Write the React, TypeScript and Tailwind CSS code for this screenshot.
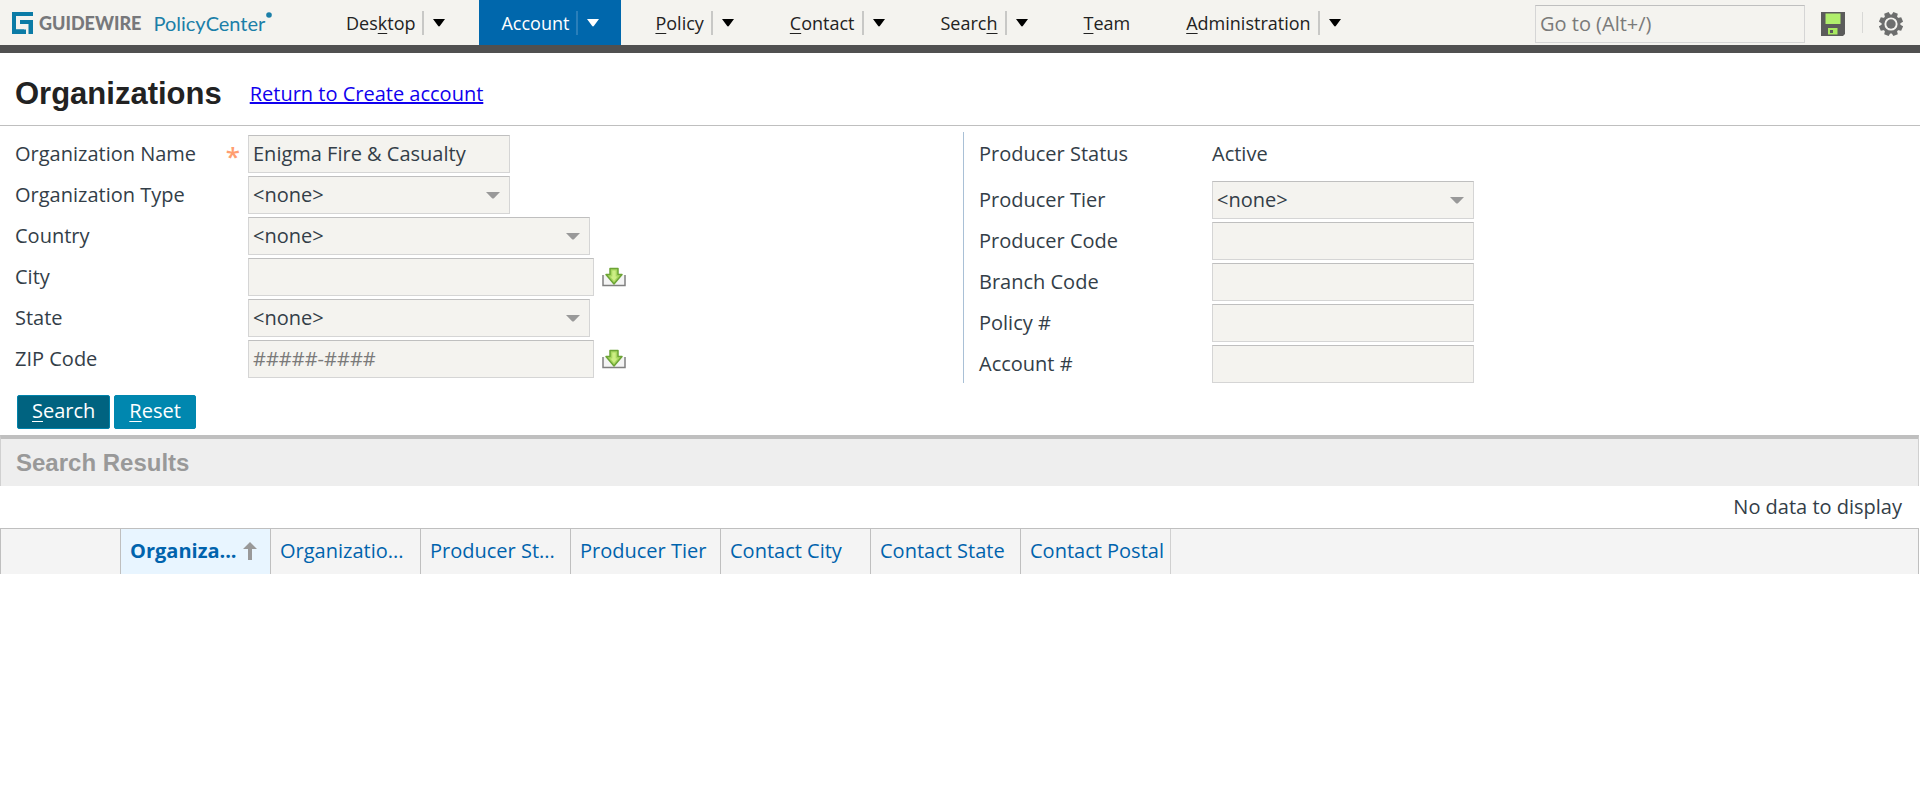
import type { ReactNode } from 'react'

type NavEntry = { before: string; key: string; after: string; menu: boolean; active?: boolean }

const NAV: NavEntry[] = [
  { before: 'Des', key: 'k', after: 'top', menu: true },
  { before: 'Account', key: '', after: '', menu: true, active: true },
  { before: '', key: 'P', after: 'olicy', menu: true },
  { before: '', key: 'C', after: 'ontact', menu: true },
  { before: 'Searc', key: 'h', after: '', menu: true },
  { before: '', key: 'T', after: 'eam', menu: false },
  { before: '', key: 'A', after: 'dministration', menu: true },
]

const CONTROL =
  'h-[38px] border border-[#d5d5d5] border-t-[#bfbfbf] bg-[#f4f3ef] px-1 text-[#333e48] placeholder:text-[#7a7a7a] placeholder:opacity-100 outline-none'

const FIELD = `${CONTROL} pb-[2px]`

function Triangle({ className }: { className: string }) {
  return (
    <svg viewBox="0 0 12 8" className={className} fill="currentColor" preserveAspectRatio="none" aria-hidden="true">
      <path d="M0 0H12L7 6.800Q6 8.200 5 6.800Z" />
    </svg>
  )
}

function NavItem({ item }: { item: NavEntry }) {
  return (
    <li
      className={
        item.active
          ? 'flex items-center bg-[#0067ac] px-[22px] pt-px text-white'
          : 'flex items-center px-[22px] pt-px text-[#222222]'
      }
    >
      <a href="#" className="leading-6">
        {item.before}
        <span className="underline decoration-1 underline-offset-3">{item.key}</span>
        {item.after}
      </a>
      {item.menu && (
        <button
          type="button"
          aria-label="Open menu"
          className={
            item.active
              ? 'ml-[7px] flex h-6 items-center border-l-2 border-[#2a7fba] pl-[9px]'
              : 'ml-[7px] flex h-6 items-center border-l-2 border-[#c8c8c6] pl-[9px] text-black'
          }
        >
          <Triangle className="h-2 w-3" />
        </button>
      )}
    </li>
  )
}

function Logo() {
  return (
    <a href="#" className="flex w-[312px] shrink-0 items-center pl-3">
      <svg viewBox="0 0 22 22" className="h-[22px] w-[22px]" aria-hidden="true" fill="#0b7ba6">
        <path d="M0 0H21V4H4V17.500H12V22H0Z" />
        <path d="M8 8H21V22H16.500V12H8Z" />
        <path d="M0 17.500H14V22H0Z" />
      </svg>
      <span className="ml-[5px] font-['Lato'] text-[18px] font-black text-[#77787b]">GUIDEWIRE</span>
      <span className="ml-3 font-['Lato'] text-[20px] text-[#1b7fa8]">PolicyCenter</span>
      <svg viewBox="0 0 6 6" className="mb-4 ml-px h-[6px] w-[6px]" aria-hidden="true">
        <circle cx="3" cy="3" r="2.800" fill="#1b7fa8" />
      </svg>
    </a>
  )
}

function SaveIcon() {
  return (
    <svg viewBox="0 0 24 24" className="h-6 w-6" aria-hidden="true">
      <path d="M0 0H24V22L22 24H0Z" fill="#5b5b5b" />
      <rect x="4.500" y="1.500" width="15" height="10.500" fill="#b0ee6c" />
      <rect x="7" y="16" width="9.500" height="6.500" fill="#a8e95f" />
      <rect x="9" y="18" width="3" height="3" fill="#5b5b5b" />
    </svg>
  )
}

function GearIcon() {
  return (
    <svg viewBox="0 0 24 24" className="h-6 w-6" aria-hidden="true">
      <g fill="#6d6e6e">
        {[0, 45, 90, 135, 180, 225, 270, 315].map((angle) => (
          <path key={angle} d="M8.800 5L9.600 0H14.400L15.200 5Z" transform={`rotate(${angle + 22.5} 12 12)`} />
        ))}
      </g>
      <circle cx="12" cy="12" r="8" fill="#f4f3ef" stroke="#6d6e6e" strokeWidth="2.800" />
      <circle cx="12" cy="12" r="4.700" fill="#6d6e6e" />
    </svg>
  )
}

function AutofillIcon() {
  return (
    <svg viewBox="0 0 24 20" className="h-5 w-6" aria-hidden="true">
      <path d="M1 8V18.500H23V8" fill="#f4f4f4" stroke="#808080" strokeWidth="1.500" />
      <path
        d="M8 1.500H16V7.500H20L12 17L4 7.500H8Z"
        fill="#a9d860"
        stroke="#6da436"
        strokeWidth="1.500"
        strokeLinejoin="round"
      />
      <path d="M10.300 3.500H13.700V9.500H15.500L12 14L8.500 9.500H10.300Z" fill="#cdee85" />
    </svg>
  )
}

function Row({ id, label, required, children }: { id: string; label: string; required?: boolean; children: ReactNode }) {
  return (
    <div className="flex items-center">
      <label htmlFor={id} className="flex w-[233px] shrink-0 items-center justify-between pr-2">
        {label}
        {required && <span className="pt-1 text-[26px] font-semibold leading-7 text-[#ff9e70]">*</span>}
      </label>
      {children}
    </div>
  )
}

function Picker({ id, wide }: { id: string; wide?: boolean }) {
  return (
    <div className={wide ? 'grid w-[342px] items-center' : 'grid w-[262px] items-center'}>
      <select id={id} className={`${CONTROL} col-start-1 row-start-1 w-full appearance-none`}>
        <option>&lt;none&gt;</option>
      </select>
      <Triangle className="pointer-events-none col-start-1 row-start-1 mr-[10px] h-[7px] w-[14px] justify-self-end text-[#999999]" />
    </div>
  )
}

function AutofillField({ id, placeholder }: { id: string; placeholder?: string }) {
  return (
    <div className="flex items-center gap-2">
      <input id={id} placeholder={placeholder} className={`${FIELD} w-[346px]`} />
      <button type="button" aria-label="Autofill">
        <AutofillIcon />
      </button>
    </div>
  )
}

const COLUMNS = ['Organizatio...', 'Producer St...', 'Producer Tier', 'Contact City', 'Contact State', 'Contact Postal']

export default function App() {
  return (
    <div className="bg-white font-['Open_Sans',sans-serif] text-[20px] leading-7 text-[#333e48]">
      <header className="flex h-[53px] border-b-8 border-[#505050] bg-[#f4f3ef]">
        <Logo />
        <nav className="flex grow text-[18px]">
          <ul className="ml-3 flex gap-3">
            {NAV.map((item) => (
              <NavItem key={item.before + item.key + item.after} item={item} />
            ))}
          </ul>
        </nav>
        <div className="flex items-center pr-[17px]">
          <input aria-label="Go to" placeholder="Go to (Alt+/)" className={`${FIELD} mt-[3px] w-[270px]`} />
          <button type="button" aria-label="Save" className="ml-4 mt-[3px]">
            <SaveIcon />
          </button>
          <span className="ml-[17px] h-[21px] w-px bg-[#d8d8d6]" />
          <button type="button" aria-label="Settings" className="ml-4 mt-[3px]">
            <GearIcon />
          </button>
        </div>
      </header>

      <main>
        <div className="flex h-[73px] items-center gap-7 border-b border-[#bfbfbf] px-[15px] pt-[10px]">
          <h1 className="font-['Liberation_Sans',sans-serif] text-[31px] font-bold text-[#222222]">Organizations</h1>
          <a href="#" className="text-[#1100ee] underline">
            Return to Create account
          </a>
        </div>

        <form onSubmit={(event) => event.preventDefault()}>
          <div className="grid grid-cols-2 pt-[6px]">
            <div className="flex flex-col gap-[3px] pl-[15px] pt-[3px]">
              <Row id="org-name" label="Organization Name" required>
                <input id="org-name" defaultValue="Enigma Fire & Casualty" className={`${FIELD} w-[262px]`} />
              </Row>
              <Row id="org-type" label="Organization Type">
                <Picker id="org-type" />
              </Row>
              <Row id="country" label="Country">
                <Picker id="country" wide />
              </Row>
              <Row id="city" label="City">
                <AutofillField id="city" />
              </Row>
              <Row id="state" label="State">
                <Picker id="state" wide />
              </Row>
              <Row id="zip" label="ZIP Code">
                <AutofillField id="zip" placeholder="#####-####" />
              </Row>
            </div>
            <div className="ml-[3px] flex flex-col gap-[3px] border-l border-[#a9c0d6] pl-[15px]">
              <div className="flex h-[46px] items-center pb-[2px]">
                <span className="w-[233px] shrink-0">Producer Status</span>
                <span>Active</span>
              </div>
              <Row id="tier" label="Producer Tier">
                <Picker id="tier" />
              </Row>
              {['Producer Code', 'Branch Code', 'Policy #', 'Account #'].map((label) => (
                <Row key={label} id={label} label={label}>
                  <input id={label} className={`${FIELD} w-[262px]`} />
                </Row>
              ))}
            </div>
          </div>
          <div className="flex gap-1 px-[17px] pb-[6px] pt-3 text-white">
            <button type="submit" className="h-[34px] rounded-[2px] border border-[#0083ab] bg-[#006380] px-[14px] pb-[2px]">
              <span className="underline decoration-1 underline-offset-3">S</span>earch
            </button>
            <button type="reset" className="h-[34px] rounded-[2px] border border-[#0087af] bg-[#0087af] px-[14px] pb-[2px]">
              <span className="underline decoration-1 underline-offset-3">R</span>eset
            </button>
          </div>
        </form>

        <section className="pr-px">
          <h2 className="flex h-[51px] items-center border-x border-t-4 border-x-[#d0d0d0] border-t-[#bfbfbf] bg-[#eeeeee] px-[15px] font-['Liberation_Sans',sans-serif] text-[24px] font-bold text-[#999999]">
            Search Results
          </h2>
          <p className="flex h-[42px] items-center justify-end pr-[17px]">No data to display</p>
          <table className="w-full table-fixed border-separate border-spacing-0 border-x border-t border-[#bfbfbf] bg-[#f4f4f4] text-left text-[#0063ad]">
            <thead>
              <tr className="h-[45px]">
                <th className="w-[119px]" aria-label="Select" />
                <th className="w-[150px] border-l border-[#bfbfbf] bg-[#e8f5ff] pb-[2px] pl-[9px]">
                  <div className="flex items-center gap-[6px]">
                    <span className="font-bold">Organiza...</span>
                    <svg viewBox="0 0 14 18" className="h-[18px] w-[14px] shrink-0" aria-hidden="true" fill="#999999">
                      <path d="M7 0L14 7H9V18H5V7H0Z" />
                    </svg>
                  </div>
                </th>
                {COLUMNS.map((name) => (
                  <th key={name} className="w-[150px] whitespace-nowrap border-l border-[#bfbfbf] pb-[2px] pl-[9px] font-normal">
                    {name}
                  </th>
                ))}
                <th className="border-l border-[#d0d0d0]" aria-label="Spacer" />
              </tr>
            </thead>
          </table>
        </section>
      </main>
    </div>
  )
}
